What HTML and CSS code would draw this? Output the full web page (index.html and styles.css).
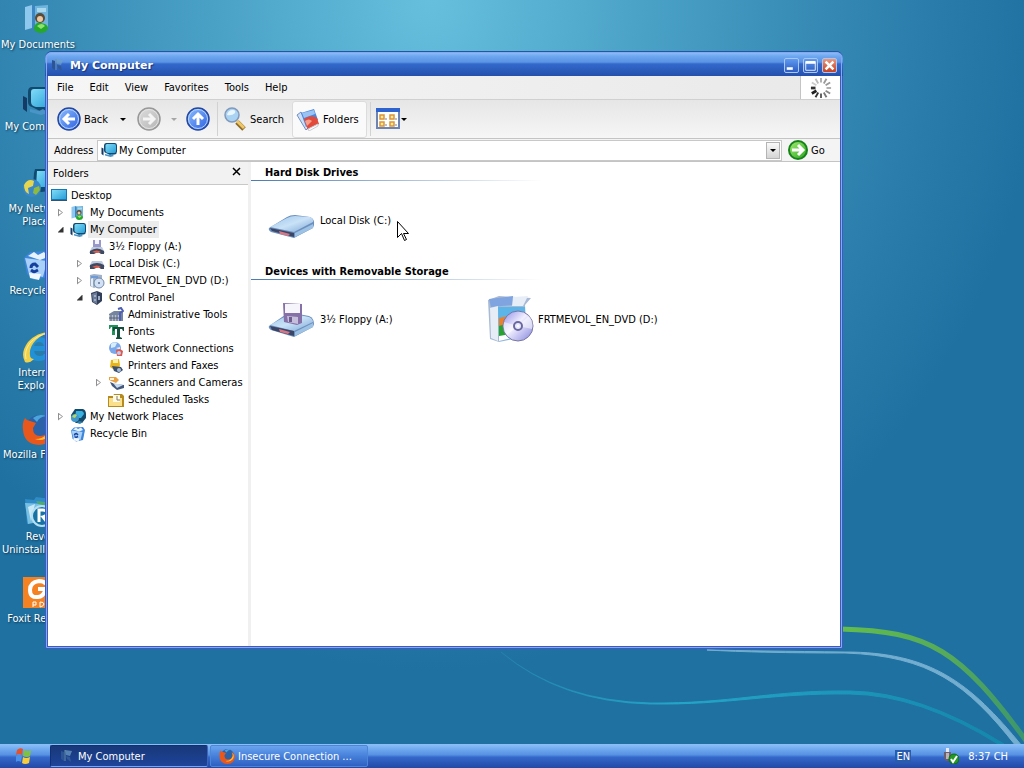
FILE: index.html
```html
<!DOCTYPE html>
<html lang="en">
<head>
  <meta charset="utf-8">
  <title>My Computer</title>
  <link rel="stylesheet" href="styles.css">
</head>
<body>
  <!-- shared icons -->
  <svg class="sprite" width="0" height="0" aria-hidden="true">
    <defs>
      <linearGradient id="g-blue" x1="0" y1="0" x2="1" y2="1"><stop offset="0" stop-color="#8fc0ff"/><stop offset="1" stop-color="#2b5ee0"/></linearGradient>
      <linearGradient id="g-gray" x1="0" y1="0" x2="1" y2="1"><stop offset="0" stop-color="#dedede"/><stop offset="1" stop-color="#b4b4b4"/></linearGradient>
      <linearGradient id="g-green" x1="0" y1="0" x2="1" y2="1"><stop offset="0" stop-color="#a6ee76"/><stop offset="1" stop-color="#28a41c"/></linearGradient>
      <linearGradient id="g-screen" x1="0" y1="0" x2="1" y2="1"><stop offset="0" stop-color="#7fdcf6"/><stop offset="1" stop-color="#2a9fd8"/></linearGradient>
      <linearGradient id="g-disk" x1="0" y1="0" x2="1" y2="1"><stop offset="0" stop-color="#9cc4e8"/><stop offset=".5" stop-color="#c9e2f7"/><stop offset="1" stop-color="#7ba6d6"/></linearGradient>
      <linearGradient id="g-cd" x1="0" y1="0" x2="1" y2="1"><stop offset="0" stop-color="#8f8ae8"/><stop offset=".45" stop-color="#f1efff"/><stop offset="1" stop-color="#8484dc"/></linearGradient>
    </defs>
    <symbol id="i-computer" viewBox="0 0 32 32">
      <path d="M1 11l4 2v14l-4-3z" fill="#163a66"/>
      <path d="M10 2h18q4 0 4 5v12q0 5-5 6l-9 1-8-4q-4-1-4-5V7q0-5 4-5z" fill="#12496f"/>
      <path d="M12 4h15q3 0 3 4v10q0 4-3 4H14q-5-1-5-5V7q0-3 3-3z" fill="url(#g-screen)"/>
      <path d="M8 24l9 2 4-2 5 4-7 2-11-3z" fill="#4a94c8"/>
    </symbol>
    <symbol id="i-docs" viewBox="0 0 32 32">
      <path d="M3 4l7-2v23l-7 2z" fill="#8fc8ee"/>
      <path d="M10 2l6 2v20l-6 1z" fill="#3c86c4"/>
      <path d="M13 3l13-1v23l-13 1z" fill="#6fb4dc"/>
      <path d="M15 5h9v4h-9z" fill="#a9d9ef"/>
      <circle cx="18" cy="15" r="5" fill="#5b4a36"/><circle cx="18" cy="16" r="3" fill="#ecc9a4"/>
      <path d="M12 25q1-6 7-5 7 1 7 5-1 5-8 5-6-1-6-5z" fill="#25a82b"/>
      <path d="M15 23q5-4 8 0l-4 3z" fill="#8ee36f"/>
    </symbol>
    <symbol id="i-network" viewBox="0 0 32 32">
      <path d="M13 2h16q3 0 3 4v13q0 4-4 5l-9 1-8-5 1-14z" fill="#114a70"/>
      <path d="M15 4h13q2 0 2 3v10q0 3-3 3H14z" fill="url(#g-screen)"/>
      <circle cx="10" cy="21" r="9" fill="#3887c8"/>
      <path d="M2 18q4-7 10-4l-1 5-5 2 1 6q-5-2-5-9z" fill="#e5d54f"/>
      <path d="M12 21l5-2 1 4-4 5-3-2z" fill="#8fb93f"/>
    </symbol>
    <symbol id="i-bin" viewBox="0 0 32 32">
      <path d="M2 9l6-6 18-1 4 6-4 20-14 3-7-6z" fill="#3c86dd"/>
      <path d="M3 9l22 3-4 16-14-3z" fill="#a8d0f8"/>
      <path d="M6 7l6-4 4 3 6-3 4 5-8 3z" fill="#e6f3ff"/>
      <path d="M9 19q0-4 4-4l3 3m0 3l-4 2-3-2" fill="none" stroke="#17409e" stroke-width="3"/>
      <path d="M7 24l12 1-2 6-9-2z" fill="#f2f8ff"/>
    </symbol>
    <symbol id="i-ie" viewBox="0 0 32 32">
      <path d="M26 20H12q1 5 6 5 3 0 4-2h6q-3 7-11 7Q5 30 5 18T18 6q10 1 10 14zM12 15h10q-1-4-5-4t-5 4z" fill="#2391d6"/>
      <path d="M30 1Q16 0 6 11-2 22 3 31q4 2 9-3-4 0-4-4Q7 16 14 9 22 2 30 1z" fill="#efd14c"/>
      <path d="M27 2Q15 4 8 12 2 20 4 28" fill="none" stroke="#fbeea0"/>
    </symbol>
    <symbol id="i-firefox" viewBox="0 0 32 32">
      <circle cx="17" cy="15" r="13" fill="#2b62a8"/>
      <path d="M11 5q6-5 13-2-7 1-9 6z" fill="#4ba5dc"/>
      <path d="M3 5q2 3 5 3l6 2-3 5q0 8 7 8 7 0 9-7 1-4-2-8 7 4 7 9-1 14-15 15Q2 31 1 17 0 10 3 5z" fill="#e8581c"/>
      <path d="M27 9q5 8 0 14-6 6-14 3 8 0 12-5 4-5 2-12z" fill="#ffbd35"/>
    </symbol>
    <symbol id="i-revo" viewBox="0 0 32 32">
      <path d="M3 4l9 1 2-3 15 2v20L5 29z" fill="#2f8cc8"/>
      <path d="M3 8l22 1-4 17-15 3z" fill="#78bfe4"/>
      <path d="M6 12l7-3-4 17z" fill="#c9e9f7"/>
      <path d="M14 6l9 1 2 4-9-2z" fill="#4daa72"/>
      <circle cx="20" cy="21" r="10" fill="#1673a4" stroke="#b6e0f2" stroke-width="2"/>
      <path d="M17 27V15h4q4 0 4 3t-4 4l4 5" fill="none" stroke="#fff" stroke-width="3"/>
    </symbol>
    <symbol id="i-foxit" viewBox="0 0 32 32">
      <path d="M1 0h31v31H1z" fill="#f48222"/>
      <path d="M24 7q-2-3-7-3-9 1-9 9t8 7q5 0 8-8h-8" fill="none" stroke="#fff" stroke-width="4"/>
      <path d="M11 30v-5h3v3h-3m7 2v-5q4 0 4 2t-4 3m7 0v-5h4m-4 2h3" fill="none" stroke="#fff" stroke-width="1"/>
    </symbol>
    <symbol id="i-desktop" viewBox="0 0 16 16">
      <path d="M0 1h16v12H0z" fill="#1478b4"/><path d="M1 2h14v9H1z" fill="url(#g-screen)"/><path d="M0 12h16v1H0z" fill="#35536f"/>
    </symbol>
    <symbol id="i-floppy" viewBox="0 0 16 16">
      <path d="M4 1h8v8H4z" fill="#9999c9"/><path d="M6 1h4v4H6z" fill="#f4f4ff"/>
      <path d="M3 8h10l3 6H0z" fill="#b8c9e0"/><path d="M1 12q7-5 14 0v3h-3l-3-2-4 2H1z" fill="#3f4960"/><path d="M3 13q5-3 9 0l-4 1z" fill="#e0604e"/>
    </symbol>
    <symbol id="i-drive" viewBox="0 0 16 16">
      <path d="M3 5h10l3 6H0z" fill="#bccbe0"/><path d="M1 9q7-4 14 0v4h-3l-3-2-4 2H1z" fill="#3f4960"/><path d="M3 11q5-3 9 0l-4 1z" fill="#e0604e"/>
    </symbol>
    <symbol id="i-dvd" viewBox="0 0 48 48">
      <path d="M2 5l11-4 32 2-6 7 2 31-28 6-9-3z" fill="#a9bad4"/>
      <path d="M3 4l24-3v9L5 12z" fill="#7fa4e0"/><path d="M27 2l15-1-5 10H26z" fill="#e8eef8"/>
      <path d="M4 13l8-2v35l-7-3z" fill="#e6edf6"/><path d="M12 12h27v30l-26 4z" fill="#5cb5e8"/>
      <path d="M13 23l9-2v8l-9 3z" fill="#ed7f28"/><path d="M13 31l10-3v11l-10 3z" fill="#27a32d"/><path d="M13 41l18-3v4l-18 4z" fill="#fff"/>
      <circle cx="32" cy="31" r="15" fill="url(#g-cd)" stroke="#7775a4"/>
      <path d="M32 31l11-10q5 6 3 13zM32 31L21 40q-5-6-3-13z" fill="#fff" opacity=".5"/>
      <circle cx="32" cy="31" r="4" fill="#e9e9ff" stroke="#6b68a0" stroke-width="2"/><circle cx="32" cy="31" r="1" fill="#fff"/>
    </symbol>
    <symbol id="i-dvd-small" viewBox="0 0 16 16">
      <path d="M1 2l4-1 8 1v10l-8 3-4-2z" fill="#9fb2ca"/><path d="M2 3h7v2H2z" fill="#6f9ad8"/><path d="M2 6l2-1v9l-2-1z" fill="#e6edf6"/><path d="M5 7l3 1v4l-3 1z" fill="#4aa85e"/>
      <circle cx="10" cy="10" r="5" fill="#d3e1f4" stroke="#7389aa"/><circle cx="10" cy="10" r="1" fill="#5e7396"/>
    </symbol>
    <symbol id="i-control" viewBox="0 0 16 16">
      <path d="M2 3l6-2 5 2v8l-5 4-5-3z" fill="#333f58"/><path d="M3 4l5-2v12l-4-2z" fill="#6c7c98"/><path d="M5 5h2v2H5zM5 9h2v2H5zM9 6h2v4H9z" fill="#9fadc4"/>
    </symbol>
    <symbol id="i-admin" viewBox="0 0 16 16">
      <path d="M1 7l5-3h9v10H1z" fill="#7585a0"/><path d="M1 8h10v6H1z" fill="#b4bfd0"/><path d="M3 8v6M6 8v6M9 8v6M1 11h10" stroke="#566078"/><path d="M10 2l3-1 2 3-3 2v8" fill="none" stroke="#4e5fb4" stroke-width="2"/>
    </symbol>
    <symbol id="i-fonts" viewBox="0 0 16 16">
      <path d="M1 1h9v4H9L8 3H7v8H4V3H3L2 5H1z" fill="#20925a"/><path d="M5 3h11v4h-1l-1-2h-2v8l2 1v1H8v-1l1-1V5H7L6 7H5z" fill="#164e3c"/>
    </symbol>
    <symbol id="i-conn" viewBox="0 0 16 16">
      <circle cx="7" cy="7" r="6" fill="#7ba8ea"/><path d="M3 3q3-3 6-1L7 6 3 7zM8 7l4-1v3z" fill="#d8edfa"/><path d="M8 9l4-1 3 2-1 5H9z" fill="#e0574b"/><circle cx="11" cy="12" r="2" fill="#b8cff6"/>
    </symbol>
    <symbol id="i-printer" viewBox="0 0 16 16">
      <path d="M3 2l8-1 1 6-1 4H5L2 9z" fill="#e8b41e"/><path d="M5 2l5-1v4H5z" fill="#fff0a8"/><path d="M4 8l9 1 2 3-4 3-5-2z" fill="#3b4e6d"/><circle cx="11" cy="12" r="2" fill="#a7bed8"/>
    </symbol>
    <symbol id="i-scanner" viewBox="0 0 16 16">
      <path d="M1 2h7l3 3-3 3-7-3z" fill="#e8a044"/><path d="M2 3h4v2H2z" fill="#fff2cf"/><path d="M2 7l5 2 9 1v3l-7 2-5-4z" fill="#45587c"/><path d="M5 8l10 2-6 3z" fill="#c9dbee"/>
    </symbol>
    <symbol id="i-tasks" viewBox="0 0 16 16">
      <path d="M0 4h5l1-2h8l2 2v11H0z" fill="#b58a21"/><path d="M1 6h13v8H1z" fill="#fae08a"/><path d="M5 3h7v7H5z" fill="#fffbe8"/><path d="M9 4v4h3" fill="none" stroke="#807a68"/>
    </symbol>
    <symbol id="i-netplaces" viewBox="0 0 16 16">
      <path d="M5 0h8q3 1 3 5v4l-4 5H6L2 11 1 6z" fill="#154a6b"/><path d="M6 2h6q2 1 2 3L11 9H5z" fill="#3bb1df"/><circle cx="5" cy="9" r="4" fill="#4298cb"/><path d="M2 8q2-4 5-2L5 9z" fill="#b9d75d"/><path d="M9 12l4 1-3 2-3-1z" fill="#2f83b4"/>
    </symbol>
    <symbol id="i-app" viewBox="0 0 16 16">
      <path d="M2 3l3 1v9l-3-2z" fill="#2c5596"/><path d="M6 2l7 1-2 5-4-1z" fill="#6fa1c9" opacity=".7"/><path d="M7 8l4 1 1 5-4-3z" fill="#2f5a96"/><path d="M6 2v11" stroke="#6991ae"/>
    </symbol>
  </svg>

  <main class="desktop">
    <svg class="swoosh" viewBox="480 600 544 144" aria-hidden="true">
      <defs>
        <linearGradient id="g-cyan"><stop offset="0" stop-color="#2690b8" stop-opacity="0.3"/><stop offset=".35" stop-color="#24a6c8"/><stop offset="1" stop-color="#1487ad"/></linearGradient>
        <linearGradient id="g-lime"><stop offset="0" stop-color="#62bd4c"/><stop offset=".6" stop-color="#55a95a"/><stop offset="1" stop-color="#3b956d"/></linearGradient>
      </defs>
      <path d="M501 652Q560 701 650 703C730 704 770 690 850 691Q920 692 1004 744L998 744Q920 695 850 694C770 693 730 705 650 704Q560 702 501 652z" fill="url(#g-cyan)" stroke="url(#g-cyan)"/>
      <path d="M707 650Q760 653 845 653C930 656 967 684 1016 746L1022 746C970 682 930 652 845 652Q760 651 707 650z" fill="#73aed0" stroke="#73aed0"/>
      <path d="M840 629C930 631 960 650 1027 742" fill="none" stroke="url(#g-lime)" stroke-width="5"/>
    </svg>

    <nav class="shortcuts">
      <a href="#"><svg><use href="#i-docs"/></svg><span>My Documents</span></a>
      <a href="#"><svg><use href="#i-computer"/></svg><span>My Computer</span></a>
      <a href="#"><svg><use href="#i-network"/></svg><span>My Network Places</span></a>
      <a href="#"><svg><use href="#i-bin"/></svg><span>Recycle Bin</span></a>
      <a href="#"><svg><use href="#i-ie"/></svg><span>Internet Explorer</span></a>
      <a href="#"><svg><use href="#i-firefox"/></svg><span>Mozilla Firefox</span></a>
      <a href="#"><svg><use href="#i-revo"/></svg><span>Revo<br>Uninstaller&nbsp;Pro</span></a>
      <a href="#"><svg><use href="#i-foxit"/></svg><span>Foxit Reader</span></a>
    </nav>

    <section class="window">
      <header class="titlebar">
        <svg class="icon"><use href="#i-app"/></svg>
        <h1>My Computer</h1>
        <button type="button" class="winbtn" aria-label="Minimize"><svg viewBox="0 0 15 15"><path d="M2 11h7" stroke="#fff" stroke-width="3"/></svg></button>
        <button type="button" class="winbtn" aria-label="Maximize"><svg viewBox="0 0 15 15"><path d="M2 3h11v10H2z" fill="none" stroke="#fff"/><path d="M2 4h11" stroke="#fff" stroke-width="3"/></svg></button>
        <button type="button" class="winbtn close" aria-label="Close"><svg viewBox="0 0 15 15"><path d="M3 3l9 9M12 3l-9 9" stroke="#fff" stroke-width="3"/></svg></button>
      </header>

      <div class="menubar">
        <button type="button">File</button>
        <button type="button">Edit</button>
        <button type="button">View</button>
        <button type="button">Favorites</button>
        <button type="button">Tools</button>
        <button type="button">Help</button>
        <div class="throbber">
          <svg viewBox="-12 -12 24 24" stroke-width="2">
            <path d="M0-6v-5" stroke="#aaa"/><path d="M3-5l3-5" stroke="#999"/><path d="M5-3l5-3" stroke="#999"/><path d="M6 0h5" stroke="#aaa"/>
            <path d="M5 3l5 3" stroke="#888"/><path d="M3 5l3 5" stroke="#777"/><path d="M0 6v5" stroke="#555"/><path d="M-3 5l-3 5" stroke="#333"/>
            <path d="M-5 3l-5 3" stroke="#222" stroke-width="3"/><path d="M-6 0h-5" stroke="#333" stroke-width="3"/><path d="M-5-3l-5-3" stroke="#ccc"/><path d="M-3-5l-3-5" stroke="#bbb"/>
          </svg>
        </div>
      </div>

      <div class="toolbar">
        <button type="button" class="back">
          <svg viewBox="0 0 24 24"><circle cx="12" cy="12" r="11" fill="url(#g-blue)" stroke="#2448a0" stroke-width="1.5"/><circle cx="12" cy="12" r="9.5" fill="none" stroke="#b8d6ff"/><path d="M18 12H7M12 7l-5 5 5 5" fill="none" stroke="#fff" stroke-width="3"/></svg>
          Back
        </button>
        <button type="button" class="arrow" aria-label="Back history"></button>
        <button type="button" class="forward" aria-label="Forward" disabled>
          <svg viewBox="0 0 24 24"><circle cx="12" cy="12" r="11" fill="url(#g-gray)" stroke="#989898" stroke-width="1.5"/><circle cx="12" cy="12" r="9.5" fill="none" stroke="#e4e4e4"/><path d="M6 12h11M12 7l5 5-5 5" fill="none" stroke="#f4f4f4" stroke-width="3"/></svg>
        </button>
        <button type="button" class="arrow faded" aria-label="Forward history" disabled></button>
        <button type="button" class="up" aria-label="Up">
          <svg viewBox="0 0 24 24"><circle cx="12" cy="12" r="11" fill="url(#g-blue)" stroke="#2448a0" stroke-width="1.5"/><circle cx="12" cy="12" r="9.5" fill="none" stroke="#b8d6ff"/><path d="M12 18V7M7 12l5-5 5 5" fill="none" stroke="#fff" stroke-width="3"/></svg>
        </button>
        <span class="sep"></span>
        <button type="button" class="search">
          <svg viewBox="0 0 24 24"><path d="M14 15l7 7" stroke="#8c6a2a" stroke-width="5"/><path d="M14 14l7 7" stroke="#f0c766" stroke-width="3"/><circle cx="9" cy="8" r="7" fill="#a9d2f3" stroke="#8299bb" stroke-width="1.5"/><path d="M4 8q1-5 6-5 3 0 2 3-3 3-8 2z" fill="#e9f6ff"/></svg>
          Search
        </button>
        <button type="button" class="folders">
          <svg viewBox="0 0 24 24"><path d="M1 8l4-3 8 15-3 3z" fill="#cfe0f5" stroke="#7090c4"/><path d="M5 6l13-4 4 11-12 7z" fill="#4a86dc"/><path d="M6 6l12-3 1 4-11 4z" fill="#9bc3f2"/><path d="M8 12q7-5 13-1l2 6-11 6z" fill="#e24a3b"/><path d="M9 14q4-3 7 0l-5 5z" fill="#f6a08b"/><path d="M12 22l10-5v2l-9 5z" fill="#fff" stroke="#c9cbd4"/></svg>
          Folders
        </button>
        <span class="sep"></span>
        <button type="button" class="views" aria-label="Views">
          <svg viewBox="0 0 24 24"><path d="M1 2h22v19H1z" fill="#fff" stroke="#6c83b4" stroke-width="2"/><path d="M0 1h24v4H0z" fill="#2e62cc"/><g fill="#ffe9a0" stroke="#dd9433" stroke-width="1.5"><path d="M4 8h4v4H4zM14 8h4v4h-4zM4 15h4v4H4zM14 15h4v4h-4z"/></g><path d="M9 12h2M19 12h2M9 18h2M19 18h2" stroke="#7083a8"/></svg>
        </button>
        <button type="button" class="arrow near" aria-label="Choose view"></button>
      </div>

      <form class="addressbar">
        <label for="address">Address</label>
        <div class="combo">
          <svg class="icon"><use href="#i-computer"/></svg>
          <input type="text" id="address" value="My Computer">
          <button type="button" aria-label="Show addresses"></button>
        </div>
        <button type="button" class="go">
          <svg viewBox="0 0 20 20"><circle cx="10" cy="10" r="9" fill="url(#g-green)" stroke="#16821a" stroke-width="2"/><path d="M4 10h9M10 5l5 5-5 5" fill="none" stroke="#fff" stroke-width="3"/></svg>
          Go
        </button>
      </form>

      <div class="panes">
        <aside class="sidebar">
          <div class="sidehead">
            <h2>Folders</h2>
            <button type="button" aria-label="Close folders"><svg viewBox="0 0 9 9"><path d="M1 1l7 7M8 1L1 8" stroke="#000" stroke-width="1.500"/></svg></button>
          </div>
          <div class="tree">
            <a href="#" class="root"><svg class="icon"><use href="#i-desktop"/></svg><span>Desktop</span></a>
            <ul>
              <li>
                <div class="row"><button type="button" class="toggle" aria-label="Expand"></button><a href="#"><svg class="icon"><use href="#i-docs"/></svg><span>My Documents</span></a></div>
              </li>
              <li>
                <div class="row"><button type="button" class="toggle open" aria-label="Collapse"></button><a href="#" class="selected"><svg class="icon"><use href="#i-computer"/></svg><span>My Computer</span></a></div>
                <ul>
                  <li><div class="row"><a href="#"><svg class="icon"><use href="#i-floppy"/></svg><span>3½ Floppy (A:)</span></a></div></li>
                  <li><div class="row"><button type="button" class="toggle" aria-label="Expand"></button><a href="#"><svg class="icon"><use href="#i-drive"/></svg><span>Local Disk (C:)</span></a></div></li>
                  <li><div class="row"><button type="button" class="toggle" aria-label="Expand"></button><a href="#"><svg class="icon"><use href="#i-dvd-small"/></svg><span>FRTMEVOL_EN_DVD (D:)</span></a></div></li>
                  <li>
                    <div class="row"><button type="button" class="toggle open" aria-label="Collapse"></button><a href="#"><svg class="icon"><use href="#i-control"/></svg><span>Control Panel</span></a></div>
                    <ul>
                      <li><div class="row"><a href="#"><svg class="icon"><use href="#i-admin"/></svg><span>Administrative Tools</span></a></div></li>
                      <li><div class="row"><a href="#"><svg class="icon"><use href="#i-fonts"/></svg><span>Fonts</span></a></div></li>
                      <li><div class="row"><a href="#"><svg class="icon"><use href="#i-conn"/></svg><span>Network Connections</span></a></div></li>
                      <li><div class="row"><a href="#"><svg class="icon"><use href="#i-printer"/></svg><span>Printers and Faxes</span></a></div></li>
                      <li><div class="row"><button type="button" class="toggle" aria-label="Expand"></button><a href="#"><svg class="icon"><use href="#i-scanner"/></svg><span>Scanners and Cameras</span></a></div></li>
                      <li><div class="row"><a href="#"><svg class="icon"><use href="#i-tasks"/></svg><span>Scheduled Tasks</span></a></div></li>
                    </ul>
                  </li>
                </ul>
              </li>
              <li><div class="row"><button type="button" class="toggle" aria-label="Expand"></button><a href="#"><svg class="icon"><use href="#i-netplaces"/></svg><span>My Network Places</span></a></div></li>
              <li><div class="row"><a href="#"><svg class="icon"><use href="#i-bin"/></svg><span>Recycle Bin</span></a></div></li>
            </ul>
          </div>
        </aside>

        <div class="content">
          <section class="group">
            <h2>Hard Disk Drives</h2>
            <div class="items">
              <a href="#">
                <svg viewBox="0 -7 48 48"><path d="M1 25L19 14q3-2 8-2l15 2q5 2 4 8l-1 3-19 10L3 29q-3-2-2-4z" fill="#6c8fbd"/><path d="M2 24l17-9q4-2 8-2l15 1q4 2 3 5L26 29z" fill="url(#g-disk)"/><path d="M2 25l24 5v4L4 28z" fill="#3b4666"/><path d="M11 28l11 3-2 2-8-2z" fill="#d87784"/><path d="M27 30l18-9v4L27 34z" fill="#9cc3e6"/></svg>
                <span>Local Disk (C:)</span>
              </a>
            </div>
          </section>
          <section class="group">
            <h2>Devices with Removable Storage</h2>
            <div class="items">
              <a href="#">
                <svg viewBox="0 0 48 48"><path d="M1 31l16-11q3-2 8-2l16 3q5 2 5 8l-1 3-19 10L3 35q-3-2-2-4z" fill="#6c8fbd"/><path d="M2 30l16-9q4-2 8-2l15 3q4 2 4 5L26 36z" fill="url(#g-disk)"/><path d="M2 31l24 5v5L4 35z" fill="#3b4666"/><path d="M11 34l11 3-2 2-8-2z" fill="#d87784"/><path d="M27 37l18-9v4L27 41z" fill="#9cc3e6"/><path d="M15 8l19 1v19l-5 2-13-3z" fill="#8670a8"/><path d="M17 9h15v9H17z" fill="#f5f5fb"/><path d="M19 21l11 1v7l-10-2z" fill="#c6bfdc"/><path d="M21 22h3v5h-3z" fill="#6d5c8e"/></svg>
                <span>3½ Floppy (A:)</span>
              </a>
              <a href="#">
                <svg><use href="#i-dvd"/></svg>
                <span>FRTMEVOL_EN_DVD (D:)</span>
              </a>
            </div>
          </section>
        </div>
      </div>
    </section>

    <svg class="cursor" viewBox="0 0 12 21" aria-hidden="true"><path d="M.5.5v16l4-4 3 7 2-1-3-6h5z" fill="#fff" stroke="#000"/></svg>
  </main>

  <footer class="taskbar">
    <button type="button" class="start" aria-label="Start">
      <svg viewBox="0 0 18 18"><path d="M2 3q3-3 6-1L7 8Q4 6 1 8z" fill="#e4522c"/><path d="M9 3q4 2 7 0l-1 6q-3 2-7 0z" fill="#7fc142"/><path d="M1 9q3-2 6 0l-1 6q-3-2-5 0z" fill="#4b91ea"/><path d="M8 10q3 2 7 0l-1 6q-4 2-7 0z" fill="#f7cd3d"/></svg>
    </button>
    <button type="button" class="task active"><svg class="icon"><use href="#i-app"/></svg><span>My Computer</span></button>
    <button type="button" class="task"><svg class="icon"><use href="#i-firefox"/></svg><span>Insecure Connection ...</span></button>
    <div class="tray">
      <button type="button" class="lang">EN</button>
      <svg class="icon" viewBox="0 0 16 16"><path d="M3 0h3v4H3z" fill="#e8e8ee"/><path d="M1 4h7v6l-2 3H3l-2-3z" fill="#6b5f6e"/><path d="M3 5h3v6H3z" fill="#bdb4ba"/><circle cx="11" cy="11" r="5" fill="#259a22" stroke="#0f6d14"/><path d="M8 11l2 3 4-6" fill="none" stroke="#fff" stroke-width="2"/></svg>
      <time>8:37 CH</time>
    </div>
  </footer>
</body>
</html>
```
FILE: styles.css
```css
* {
  box-sizing: border-box;
}

body {
  margin: 0;
  height: 100vh;
  display: flex;
  flex-direction: column;
  overflow: hidden;
  font-family: "DejaVu Sans Condensed", "DejaVu Sans", sans-serif;
  font-size: 11px;
  line-height: 13px;
  color: #000000;
}

button {
  margin: 0;
  padding: 0;
  border: none;
  background: none;
  font: inherit;
  color: inherit;
}

a {
  color: inherit;
  text-decoration: none;
}

h1, h2, ul {
  margin: 0;
  padding: 0;
  font-size: 11px;
  list-style: none;
}

svg {
  display: block;
  flex: none;
}

.sprite {
  position: absolute;
}

.icon {
  width: 16px;
  height: 16px;
}

/* desktop */

.desktop {
  position: relative;
  flex: 1;
  min-height: 0;
  background: radial-gradient(ellipse 60% 90% at 42% 0, #66c0dd 0%, #52aacd 25%, #3488b3 65%, #1f71a1 100%);
}

.swoosh {
  position: absolute;
  right: 0;
  bottom: 0;
  width: 544px;
  height: 144px;
}

.shortcuts {
  display: grid;
  grid-auto-rows: 82px;
  width: 76px;
  padding-top: 3px;
}

.shortcuts a {
  display: flex;
  flex-direction: column;
  align-items: center;
  gap: 3px;
  color: #ffffff;
  text-align: center;
  text-shadow: 1px 1px 2px #0b3350;
}

.shortcuts svg {
  width: 32px;
  height: 32px;
}

/* window */

.window {
  position: absolute;
  top: 51px;
  right: 181px;
  bottom: 95px;
  left: 45px;
  display: flex;
  flex-direction: column;
  border: 3px solid #3a5cc0;
  border-top: none;
  border-radius: 7px 7px 0 0;
  background-color: #3a5cc0;
  outline: 1px solid #8aa6f0;
  outline-offset: -2px;
}

.titlebar {
  display: flex;
  align-items: center;
  gap: 4px;
  height: 25px;
  margin: 0 -3px;
  padding: 2px 6px 0 5px;
  border-radius: 7px 7px 0 0;
  border-top: 1px solid #2456a8;
  background: linear-gradient(#8cc2fa 0, #6ba4ee 20%, #5a94e4 42%, #3369cc 50%, #2450ac 100%);
}

.titlebar h1 {
  flex: 1;
  font-family: "DejaVu Sans", sans-serif;
  font-size: 11px;
  color: #ffffff;
  text-shadow: 1px 1px 1px #16357c;
}

.winbtn {
  width: 15px;
  height: 15px;
  border: 1px solid #a9c6f4;
  border-radius: 2px;
  background: linear-gradient(#5f9af0, #2d5cc2);
}

.winbtn.close {
  background: linear-gradient(#e89880, #c43f22);
}

.menubar {
  display: flex;
  height: 24px;
  padding-left: 1px;
  border-bottom: 1px solid #d0d0d0;
  background: linear-gradient(90deg, #f6f6f6, #e9e9e9);
}

.menubar button {
  padding: 0 8px;
}

.throbber {
  display: flex;
  align-items: center;
  justify-content: center;
  width: 40px;
  margin-left: auto;
  border-left: 1px solid #c4c4c4;
  background-color: #ffffff;
}

.throbber svg {
  width: 22px;
  height: 22px;
}

.toolbar {
  display: flex;
  align-items: center;
  height: 39px;
  padding-left: 9px;
  border-bottom: 1px solid #c4c4c4;
  background: linear-gradient(#e6e6e6, #f6f6f6);
}

.toolbar button {
  display: flex;
  align-items: center;
  gap: 3px;
}

.toolbar svg {
  width: 24px;
  height: 24px;
}

.toolbar .arrow {
  justify-content: center;
  width: 29px;
}

.arrow::before,
.combo button::before {
  content: "";
  border: 3px solid transparent;
  border-top-color: #000000;
  border-bottom: none;
}

.toolbar .faded {
  width: 25px;
  opacity: 0.3;
}

.toolbar .near {
  width: 8px;
}

.sep {
  width: 1px;
  height: 34px;
  margin: 0 5px 0 7px;
  background-color: #d2d2d2;
}

.toolbar .folders {
  height: 37px;
  margin-left: 8px;
  padding: 0 7px 0 3px;
  border: 1px solid #dcdcdc;
  border-radius: 3px;
  background-color: #fafafa;
}

.folders + .sep {
  margin-left: 3px;
}

.addressbar {
  display: flex;
  align-items: center;
  height: 23px;
  padding-left: 6px;
  border-bottom: 1px solid #c4c4c4;
  background-color: #f4f4f4;
}

.addressbar label {
  width: 43px;
}

.combo {
  flex: 1;
  display: flex;
  align-items: center;
  height: 21px;
  padding: 1px;
  padding-left: 3px;
  border: 1px solid #c8c8c8;
  background-color: #ffffff;
}

.combo input {
  flex: 1;
  min-width: 0;
  height: 17px;
  padding: 1px 2px 0;
  border: none;
  outline: none;
  background: none;
  font: inherit;
}

.combo button {
  display: flex;
  align-items: center;
  justify-content: center;
  width: 14px;
  height: 17px;
  border: 1px solid #b4b4b4;
  background: linear-gradient(#fafafa, #d4d4d4);
}

.go {
  display: flex;
  align-items: center;
  gap: 3px;
  width: 58px;
  padding-left: 6px;
}

.go svg {
  width: 20px;
  height: 20px;
}

.panes {
  flex: 1;
  display: flex;
  min-height: 0;
  background-color: #ffffff;
}

/* folder tree */

.sidebar {
  width: 203px;
  border-right: 3px solid #f0f0f0;
}

.sidehead {
  display: flex;
  justify-content: space-between;
  height: 23px;
  padding: 5px 7px 0 5px;
  border-bottom: 1px solid #c8c8c8;
  background-color: #f2f2f2;
}

.sidehead h2 {
  font-weight: normal;
}

.sidehead button {
  align-self: flex-start;
}

.sidehead svg {
  width: 9px;
  height: 9px;
}

.tree {
  padding: 2px 0 0 3px;
}

.tree ul ul {
  padding-left: 19px;
}

.tree a {
  display: flex;
  align-items: center;
  gap: 2px;
  height: 17px;
}

.tree span {
  padding: 2px;
}

.row {
  display: flex;
  padding-left: 19px;
}

.toggle {
  display: flex;
  align-items: center;
  justify-content: center;
  width: 19px;
  height: 17px;
  margin-left: -19px;
}

.toggle::before {
  content: "";
  width: 5px;
  height: 8px;
  background-color: #909090;
  clip-path: polygon(0 0, 100% 50%, 0 100%, 0 0, 1px 2px, 1px 6px, 4px 4px, 1px 2px);
}

.toggle.open::before {
  width: 6px;
  height: 6px;
  background-color: #333333;
  clip-path: polygon(100% 0, 100% 100%, 0 100%);
}

.tree .selected span {
  background-color: #ececec;
}

/* drive list */

.content {
  flex: 1;
  min-width: 0;
}

.group {
  height: 99px;
}

.group h2 {
  width: 290px;
  padding: 4px 0 1px 14px;
  border-bottom: 1px solid;
  border-image: linear-gradient(90deg, #4a7ab0, #ffffff) 1;
}

.items {
  display: flex;
  flex-wrap: wrap;
  padding: 15px 0 0 17px;
}

.items a {
  display: flex;
  gap: 4px;
  width: 218px;
}

.items svg {
  width: 48px;
  height: 48px;
}

.items span {
  padding-top: 18px;
}

.cursor {
  position: absolute;
  top: 221px;
  left: 397px;
  width: 12px;
  height: 21px;
}

/* taskbar */

.taskbar {
  display: flex;
  align-items: center;
  gap: 2px;
  height: 24px;
  background: linear-gradient(#8cc0f8 0, #6ca6ee 25%, #5791e2 45%, #3468cb 55%, #2349a6 100%);
  color: #ffffff;
}

.start {
  display: flex;
  justify-content: center;
  width: 48px;
}

.start svg {
  width: 18px;
  height: 18px;
}

.task {
  display: flex;
  align-items: center;
  gap: 3px;
  width: 158px;
  height: 22px;
  padding-left: 8px;
  border: 1px solid #4c86d8;
  border-radius: 2px;
  background: linear-gradient(#6aa4ee, #4680da 50%, #2f60c2);
}

.task.active {
  border-color: #122f74 #3c66bc #7ea4e8 #122f74;
  background: linear-gradient(#183878, #1e449a);
}

.tray {
  display: flex;
  align-items: center;
  margin-left: auto;
  padding-right: 16px;
}

.lang {
  width: 16px;
  margin-right: 32px;
  background-color: #2a5cae;
}

.tray time {
  margin-left: 9px;
}
```
